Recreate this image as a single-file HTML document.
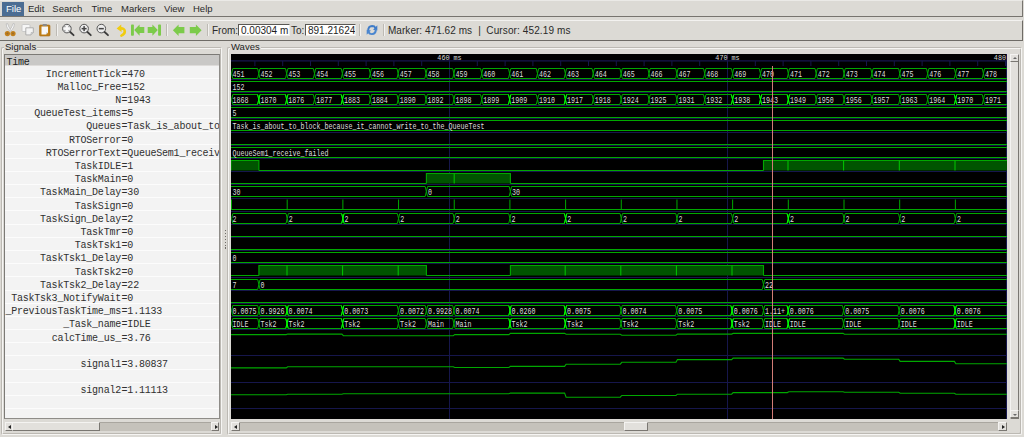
<!DOCTYPE html>
<html><head><meta charset="utf-8">
<style>
*{margin:0;padding:0;box-sizing:border-box}
html,body{width:1024px;height:437px;overflow:hidden;background:#dcdad5;font-family:"Liberation Sans",sans-serif;font-size:10px;color:#1e1e1e;position:relative}
.abs{position:absolute}
#menubar{left:0;top:0;width:1023px;height:17px;background:#dcdad5;border-bottom:1px solid #77746f;border-right:1px solid #77746f;border-top:1px solid #ebeae7}
.mi{position:absolute;top:3.2px;height:11px;line-height:11px;font-size:9.5px;color:#2a2a2a}
#filehl{left:2px;top:2px;width:22px;height:14px;background:#4b6d93}
#toolbar{left:0;top:20px;width:1023px;height:21px;background:#dcdad5;border-top:1px solid #f3f2f0;border-bottom:1px solid #6e6b66;border-right:1px solid #6e6b66}
.tsep{position:absolute;top:24px;width:2px;height:12px;border-left:1px solid #bdbab4;border-right:1px solid #f2f1ef}
.inp{position:absolute;top:24px;height:12px;background:#fff;border:1px solid #5a5854;border-right-color:#eeede9;border-bottom-color:#eeede9;font-size:10px;line-height:11px;padding-left:2px;overflow:hidden;white-space:nowrap}
.tl{position:absolute;top:24.5px;font-size:10px;line-height:11px;white-space:nowrap;color:#2a2a2a}
.frame{position:absolute;border:1px solid #bcb9b3;border-right-color:#f6f5f3;border-bottom-color:#f6f5f3;box-shadow:inset 1px 1px 0 #f6f5f3, inset -1px -1px 0 #bcb9b3;border-radius:2px}
.flabel{position:absolute;top:41px;font-size:9.5px;line-height:11px;background:#dcdad5;padding:0 1px;color:#1e1e1e}
#list{left:4px;top:54px;width:216px;height:365px;background:#f3f3f3;border:1px solid #7c7a76;border-right-color:#8e8c88;border-bottom-color:#8e8c88;overflow:hidden}
#listhdr{position:absolute;left:0;top:0;width:100%;height:11px;background:#c9c8c6;border-bottom:1px solid #dedcda}
.rl{position:absolute;left:0;width:216px;height:1px;background:#fcfcfc}
.sn,.sv{position:absolute;font-family:"Liberation Mono",monospace;font-size:10px;letter-spacing:-0.22px;line-height:12px;white-space:nowrap;color:#303030}
.sn{right:98px;text-align:right}
.sv{left:121.6px}
.hs{position:absolute;height:9px;background:#c5c2bb;border-top:1px solid #a9a69f}
.arl{position:absolute;left:2px;top:1.5px;width:0;height:0;border-top:2.5px solid transparent;border-bottom:2.5px solid transparent;border-right:3px solid #222}
.arr{position:absolute;left:3px;top:1.5px;width:0;height:0;border-top:2.5px solid transparent;border-bottom:2.5px solid transparent;border-left:3px solid #222}
.aru{position:absolute;left:1.5px;top:2px;width:0;height:0;border-left:2.5px solid transparent;border-right:2.5px solid transparent;border-bottom:2px solid #666}
.ard{position:absolute;left:1.5px;top:2.5px;width:0;height:0;border-left:2.5px solid transparent;border-right:2.5px solid transparent;border-top:2px solid #666}
.sbtn{position:absolute;background:#e2e0dc;border:1px solid #7a7772;border-left-color:#f4f3f1;border-top-color:#f4f3f1}
svg text.wt{font-family:"Liberation Mono",monospace;font-size:9px;fill:#dedede}
svg text.rt{font-family:"Liberation Mono",monospace;font-size:7.4px;fill:#d8d8d8}
</style></head><body>
<div id="menubar" class="abs"></div>
<div id="filehl" class="abs"></div>
<div class="mi" style="left:6px;color:#fff">File</div>
<div class="mi" style="left:28px">Edit</div>
<div class="mi" style="left:52.3px">Search</div>
<div class="mi" style="left:91.5px">Time</div>
<div class="mi" style="left:121px">Markers</div>
<div class="mi" style="left:164px">View</div>
<div class="mi" style="left:193px">Help</div>

<div id="toolbar" class="abs"></div>
<!-- icons -->
<svg class="abs" style="left:0;top:18px" width="212" height="22" viewBox="0 18 212 22">
 <!-- scissors -->
 <g>
  <path d="M6.2,23.8 Q5.8,26.5 9.6,31.2 L10.9,30.4 Q8.2,26.4 7.6,23.6 Z" fill="#fbfbfb" stroke="#a9a9a9" stroke-width="0.6"/>
  <path d="M14.4,23.8 Q14.8,26.5 11,31.2 L9.7,30.4 Q12.4,26.4 13,23.6 Z" fill="#fbfbfb" stroke="#a9a9a9" stroke-width="0.6"/>
  <circle cx="7.4" cy="33.6" r="2.6" fill="#c2801c"/>
  <circle cx="13.0" cy="33.6" r="2.6" fill="#c2801c"/>
  <circle cx="7.4" cy="33.6" r="1.0" fill="#9a6a2a"/>
  <circle cx="13.0" cy="33.6" r="1.0" fill="#9a6a2a"/>
 </g>
 <!-- copy -->
 <rect x="22" y="24.5" width="8" height="7" rx="1" fill="#f6f6f6" stroke="#c2c2c2" stroke-width="0.8"/>
 <path d="M25.8,27.8 L33.3,27.8 L33.3,32.6 L31,34.9 L25.8,34.9 Z" fill="#f3f3f3" stroke="#a0a0a0" stroke-width="0.8"/>
 <path d="M31,34.9 L31,32.6 L33.3,32.6" fill="#d8d8d8" stroke="#a0a0a0" stroke-width="0.5"/>
 <!-- paste -->
 <rect x="39.5" y="25" width="10.5" height="11" rx="1" fill="#c07f16" stroke="#a86a10" stroke-width="0.6"/>
 <path d="M41.5,26.6 L48,26.6 L48,32.5 L46,34.6 L41.5,34.6 Z" fill="#f8f8f8"/>
 <path d="M46,34.6 L46,32.5 L48,32.5 Z" fill="#c8c8c8"/>
 <rect x="42.5" y="24" width="4.5" height="2" rx="0.8" fill="#8a8a8a"/>
 <!-- zoom fit -->
 <g fill="none" stroke="#555" stroke-width="1">
  <circle cx="66.9" cy="28.6" r="4.3" fill="#ececec"/>
  <circle cx="84.1" cy="28.6" r="4.3" fill="#ececec"/>
  <circle cx="101.3" cy="28.6" r="4.3" fill="#ececec"/>
 </g>
 <g stroke="#3c3c3c" stroke-width="1.8" stroke-linecap="round">
  <line x1="70.2" y1="32" x2="73.6" y2="35.2"/>
  <line x1="87.4" y1="32" x2="90.8" y2="35.2"/>
  <line x1="104.6" y1="32" x2="108" y2="35.2"/>
 </g>
 <g fill="#fafafa"><rect x="64.3" y="27.8" width="5.2" height="1.6"/><rect x="66.1" y="26" width="1.6" height="5.2"/></g>
 <g fill="#444"><rect x="81.6" y="27.9" width="5" height="1.5"/><rect x="83.35" y="26.1" width="1.5" height="5"/><rect x="98.8" y="27.9" width="5" height="1.5"/></g>
 <!-- undo -->
 <path d="M116.6,28.6 L121.2,24.4 L121.6,32 Z" fill="#f0cc10"/>
 <path d="M120,28.4 Q124.8,28 124.8,31.6 Q124.8,34.2 121.4,35.6" fill="none" stroke="#f0cc10" stroke-width="2.6" stroke-linecap="round"/>
 <!-- first -->
 <rect x="131" y="24.4" width="2.9" height="11.4" rx="0.8" fill="#7ccb4a"/>
 <path d="M134.2,30.1 L139.6,24.4 L139.6,27.1 L144.3,27.1 L144.3,33 L139.6,33 L139.6,35.8 Z" fill="#7ccb4a"/>
 <!-- last -->
 <rect x="158.1" y="24.4" width="2.9" height="11.4" rx="0.8" fill="#7ccb4a"/>
 <path d="M157.8,30.1 L152.4,24.4 L152.4,27.1 L147.7,27.1 L147.7,33 L152.4,33 L152.4,35.8 Z" fill="#7ccb4a"/>
 <!-- left / right -->
 <path d="M172.9,30.2 L178.6,24.5 L178.6,27.1 L184.4,27.1 L184.4,33.2 L178.6,33.2 L178.6,36 Z" fill="#7ccb4a"/>
 <path d="M201.6,30.2 L195.9,24.5 L195.9,27.1 L189.8,27.1 L189.8,33.2 L195.9,33.2 L195.9,36 Z" fill="#7ccb4a"/>
 <!-- zoom fit marks -->
 <g fill="#9a9a9a"><circle cx="64.8" cy="26.5" r="0.8"/><circle cx="69" cy="26.5" r="0.8"/><circle cx="64.8" cy="30.7" r="0.8"/><circle cx="69" cy="30.7" r="0.8"/></g>
</svg>
<div class="tsep" style="left:56px"></div>
<div class="tsep" style="left:166px"></div>
<div class="tsep" style="left:207px"></div>
<div class="tl" style="left:212px">From:</div>
<div class="inp" style="left:238px;width:52px">0.00304 m</div>
<div class="tl" style="left:291px">To:</div>
<div class="inp" style="left:305px;width:51px">891.21624</div>
<div class="tsep" style="left:359px"></div>
<svg class="abs" style="left:364px;top:22px" width="16" height="16" viewBox="0 0 16 16">
 <g transform="translate(8,8) scale(0.86) translate(-8,-8)">
 <path d="M3.6,9.2 Q3.4,3.6 8.2,3.4 Q10.9,3.4 12,5.6" fill="none" stroke="#3f7cc8" stroke-width="2.3"/>
 <path d="M14.2,2.6 L14.2,8.6 L9.2,7.6 Z" fill="#3f7cc8"/>
 <path d="M12.4,6.8 Q12.6,12.6 7.8,12.8 Q5.1,12.8 4,10.6" fill="none" stroke="#4a86cf" stroke-width="2.3"/>
 <path d="M1.8,13.6 L1.8,7.6 L6.8,8.6 Z" fill="#4a86cf"/>
 </g>
</svg>
<div class="tsep" style="left:383px"></div>
<div class="tl" style="left:388px;letter-spacing:0.04px">Marker: 471.62 ms</div>
<div class="tl" style="left:478.3px">|</div>
<div class="tl" style="left:486.3px;letter-spacing:0.12px">Cursor: 452.19 ms</div>

<!-- Signals frame -->
<div class="frame" style="left:1px;top:47px;width:221px;height:388px"></div>
<div class="flabel" style="left:4px">Signals</div>
<div id="list" class="abs">
 <div id="listhdr"></div>
 <div style="position:absolute;left:1.5px;top:1.5px;font-family:'Liberation Mono',monospace;font-size:10px;letter-spacing:-0.22px;line-height:11px;color:#222">Time</div>
</div>
<div class="abs" style="left:5px;top:55px;width:214px;height:363px;overflow:hidden">
<div class="rl" style="top:23.49px"></div>
<div class="rl" style="top:36.68px"></div>
<div class="rl" style="top:49.87px"></div>
<div class="rl" style="top:63.06px"></div>
<div class="rl" style="top:76.25px"></div>
<div class="rl" style="top:89.44px"></div>
<div class="rl" style="top:102.63px"></div>
<div class="rl" style="top:115.82px"></div>
<div class="rl" style="top:129.01px"></div>
<div class="rl" style="top:142.20px"></div>
<div class="rl" style="top:155.39px"></div>
<div class="rl" style="top:168.58px"></div>
<div class="rl" style="top:181.77px"></div>
<div class="rl" style="top:194.96px"></div>
<div class="rl" style="top:208.15px"></div>
<div class="rl" style="top:221.34px"></div>
<div class="rl" style="top:234.53px"></div>
<div class="rl" style="top:247.72px"></div>
<div class="rl" style="top:260.91px"></div>
<div class="rl" style="top:274.10px"></div>
<div class="rl" style="top:287.29px"></div>
<div class="rl" style="top:300.48px"></div>
<div class="rl" style="top:313.67px"></div>
<div class="rl" style="top:326.86px"></div>
<div class="rl" style="top:340.05px"></div>
<div class="rl" style="top:353.24px"></div>
</div>
<div class="abs" style="left:0;top:0;width:219px;height:418px;overflow:hidden">
<div class="sn" style="top:68.70px">IncrementTick</div><div class="sv" style="top:68.70px">=470</div>
<div class="sn" style="top:81.89px">Malloc_Free</div><div class="sv" style="top:81.89px">=152</div>
<div class="sn" style="top:95.08px">N</div><div class="sv" style="top:95.08px">=1943</div>
<div class="sn" style="top:108.27px">QueueTest_items</div><div class="sv" style="top:108.27px">=5</div>
<div class="sn" style="top:121.46px">Queues</div><div class="sv" style="top:121.46px">=Task_is_about_to_block_because_it_cannot_write_to_the_QueueTest</div>
<div class="sn" style="top:134.65px">RTOSerror</div><div class="sv" style="top:134.65px">=0</div>
<div class="sn" style="top:147.84px">RTOSerrorText</div><div class="sv" style="top:147.84px">=QueueSem1_receive_failed</div>
<div class="sn" style="top:161.03px">TaskIDLE</div><div class="sv" style="top:161.03px">=1</div>
<div class="sn" style="top:174.22px">TaskMain</div><div class="sv" style="top:174.22px">=0</div>
<div class="sn" style="top:187.41px">TaskMain_Delay</div><div class="sv" style="top:187.41px">=30</div>
<div class="sn" style="top:200.60px">TaskSign</div><div class="sv" style="top:200.60px">=0</div>
<div class="sn" style="top:213.79px">TaskSign_Delay</div><div class="sv" style="top:213.79px">=2</div>
<div class="sn" style="top:226.98px">TaskTmr</div><div class="sv" style="top:226.98px">=0</div>
<div class="sn" style="top:240.17px">TaskTsk1</div><div class="sv" style="top:240.17px">=0</div>
<div class="sn" style="top:253.36px">TaskTsk1_Delay</div><div class="sv" style="top:253.36px">=0</div>
<div class="sn" style="top:266.55px">TaskTsk2</div><div class="sv" style="top:266.55px">=0</div>
<div class="sn" style="top:279.74px">TaskTsk2_Delay</div><div class="sv" style="top:279.74px">=22</div>
<div class="sn" style="top:292.93px">TaskTsk3_NotifyWait</div><div class="sv" style="top:292.93px">=0</div>
<div class="sn" style="top:306.12px">_PreviousTaskTime_ms</div><div class="sv" style="top:306.12px">=1.1133</div>
<div class="sn" style="top:319.31px">_Task_name</div><div class="sv" style="top:319.31px">=IDLE</div>
<div class="sn" style="top:332.50px">calcTime_us_</div><div class="sv" style="top:332.50px">=3.76</div>
<div class="sn" style="top:358.88px">signal1</div><div class="sv" style="top:358.88px">=3.80837</div>
<div class="sn" style="top:385.26px">signal2</div><div class="sv" style="top:385.26px">=1.11113</div>
</div>
<!-- signals hscroll -->
<div class="hs" style="left:5px;top:422px;width:214px"></div>
<div class="sbtn" style="left:5px;top:422px;width:8px;height:9px"><div class="arl"></div></div>
<div class="sbtn" style="left:12px;top:422px;width:88px;height:9px"></div>
<div class="sbtn" style="left:211px;top:422px;width:8px;height:9px"><div class="arr"></div></div>

<!-- Waves frame -->
<div class="frame" style="left:227px;top:47px;width:795px;height:388px"></div>
<div class="flabel" style="left:230px">Waves</div>
<svg class="abs" style="left:231px;top:54px;background:#000" width="776" height="365" viewBox="231 54 776 365">
<rect x="231" y="54" width="776" height="365" fill="#000"/>
<line x1="449.5" y1="54.0" x2="449.5" y2="419.0" stroke="#16164c" stroke-width="1"/>
<line x1="727.5" y1="54.0" x2="727.5" y2="419.0" stroke="#16164c" stroke-width="1"/>
<line x1="1006.5" y1="54.0" x2="1006.5" y2="419.0" stroke="#16164c" stroke-width="1"/>
<line x1="231.0" y1="60.9" x2="1007.0" y2="60.9" stroke="#16164c" stroke-width="1.2"/>
<line x1="254.90" y1="60.9" x2="254.90" y2="66" stroke="#16164c" stroke-width="1"/>
<line x1="282.70" y1="60.9" x2="282.70" y2="66" stroke="#16164c" stroke-width="1"/>
<line x1="310.50" y1="60.9" x2="310.50" y2="66" stroke="#16164c" stroke-width="1"/>
<line x1="338.30" y1="60.9" x2="338.30" y2="66" stroke="#16164c" stroke-width="1"/>
<line x1="366.10" y1="60.9" x2="366.10" y2="66" stroke="#16164c" stroke-width="1"/>
<line x1="393.90" y1="60.9" x2="393.90" y2="66" stroke="#16164c" stroke-width="1"/>
<line x1="421.70" y1="60.9" x2="421.70" y2="66" stroke="#16164c" stroke-width="1"/>
<line x1="449.50" y1="60.9" x2="449.50" y2="66" stroke="#16164c" stroke-width="1"/>
<line x1="477.30" y1="60.9" x2="477.30" y2="66" stroke="#16164c" stroke-width="1"/>
<line x1="505.10" y1="60.9" x2="505.10" y2="66" stroke="#16164c" stroke-width="1"/>
<line x1="532.90" y1="60.9" x2="532.90" y2="66" stroke="#16164c" stroke-width="1"/>
<line x1="560.70" y1="60.9" x2="560.70" y2="66" stroke="#16164c" stroke-width="1"/>
<line x1="588.50" y1="60.9" x2="588.50" y2="66" stroke="#16164c" stroke-width="1"/>
<line x1="616.30" y1="60.9" x2="616.30" y2="66" stroke="#16164c" stroke-width="1"/>
<line x1="644.10" y1="60.9" x2="644.10" y2="66" stroke="#16164c" stroke-width="1"/>
<line x1="671.90" y1="60.9" x2="671.90" y2="66" stroke="#16164c" stroke-width="1"/>
<line x1="699.70" y1="60.9" x2="699.70" y2="66" stroke="#16164c" stroke-width="1"/>
<line x1="727.50" y1="60.9" x2="727.50" y2="66" stroke="#16164c" stroke-width="1"/>
<line x1="755.30" y1="60.9" x2="755.30" y2="66" stroke="#16164c" stroke-width="1"/>
<line x1="783.10" y1="60.9" x2="783.10" y2="66" stroke="#16164c" stroke-width="1"/>
<line x1="810.90" y1="60.9" x2="810.90" y2="66" stroke="#16164c" stroke-width="1"/>
<line x1="838.70" y1="60.9" x2="838.70" y2="66" stroke="#16164c" stroke-width="1"/>
<line x1="866.50" y1="60.9" x2="866.50" y2="66" stroke="#16164c" stroke-width="1"/>
<line x1="894.30" y1="60.9" x2="894.30" y2="66" stroke="#16164c" stroke-width="1"/>
<line x1="922.10" y1="60.9" x2="922.10" y2="66" stroke="#16164c" stroke-width="1"/>
<line x1="949.90" y1="60.9" x2="949.90" y2="66" stroke="#16164c" stroke-width="1"/>
<line x1="977.70" y1="60.9" x2="977.70" y2="66" stroke="#16164c" stroke-width="1"/>
<line x1="1005.50" y1="60.9" x2="1005.50" y2="66" stroke="#16164c" stroke-width="1"/>
<text x="437.35" y="59.8" class="rt" textLength="24.30" lengthAdjust="spacingAndGlyphs">460 ms</text>
<text x="715.35" y="59.8" class="rt" textLength="24.30" lengthAdjust="spacingAndGlyphs">470 ms</text>
<text x="993.85" y="59.8" class="rt" textLength="24.30" lengthAdjust="spacingAndGlyphs">480 ms</text>
<path d="M231.60,73.5 L232.80,68.5 L257.60,68.5 L258.80,73.5 L257.60,78.5 L232.80,78.5 Z M258.80,73.5 L260.00,68.5 L285.47,68.5 L286.67,73.5 L285.47,78.5 L260.00,78.5 Z M286.67,73.5 L287.87,68.5 L313.34,68.5 L314.54,73.5 L313.34,78.5 L287.87,78.5 Z M314.54,73.5 L315.74,68.5 L341.21,68.5 L342.41,73.5 L341.21,78.5 L315.74,78.5 Z M342.41,73.5 L343.61,68.5 L369.08,68.5 L370.28,73.5 L369.08,78.5 L343.61,78.5 Z M370.28,73.5 L371.48,68.5 L396.95,68.5 L398.15,73.5 L396.95,78.5 L371.48,78.5 Z M398.15,73.5 L399.35,68.5 L424.82,68.5 L426.02,73.5 L424.82,78.5 L399.35,78.5 Z M426.02,73.5 L427.22,68.5 L452.69,68.5 L453.89,73.5 L452.69,78.5 L427.22,78.5 Z M453.89,73.5 L455.09,68.5 L480.56,68.5 L481.76,73.5 L480.56,78.5 L455.09,78.5 Z M481.76,73.5 L482.96,68.5 L508.43,68.5 L509.63,73.5 L508.43,78.5 L482.96,78.5 Z M509.63,73.5 L510.83,68.5 L536.30,68.5 L537.50,73.5 L536.30,78.5 L510.83,78.5 Z M537.50,73.5 L538.70,68.5 L564.17,68.5 L565.37,73.5 L564.17,78.5 L538.70,78.5 Z M565.37,73.5 L566.57,68.5 L592.04,68.5 L593.24,73.5 L592.04,78.5 L566.57,78.5 Z M593.24,73.5 L594.44,68.5 L619.91,68.5 L621.11,73.5 L619.91,78.5 L594.44,78.5 Z M621.11,73.5 L622.31,68.5 L647.78,68.5 L648.98,73.5 L647.78,78.5 L622.31,78.5 Z M648.98,73.5 L650.18,68.5 L675.65,68.5 L676.85,73.5 L675.65,78.5 L650.18,78.5 Z M676.85,73.5 L678.05,68.5 L703.52,68.5 L704.72,73.5 L703.52,78.5 L678.05,78.5 Z M704.72,73.5 L705.92,68.5 L731.39,68.5 L732.59,73.5 L731.39,78.5 L705.92,78.5 Z M732.59,73.5 L733.79,68.5 L759.26,68.5 L760.46,73.5 L759.26,78.5 L733.79,78.5 Z M760.46,73.5 L761.66,68.5 L787.13,68.5 L788.33,73.5 L787.13,78.5 L761.66,78.5 Z M788.33,73.5 L789.53,68.5 L815.00,68.5 L816.20,73.5 L815.00,78.5 L789.53,78.5 Z M816.20,73.5 L817.40,68.5 L842.87,68.5 L844.07,73.5 L842.87,78.5 L817.40,78.5 Z M844.07,73.5 L845.27,68.5 L870.74,68.5 L871.94,73.5 L870.74,78.5 L845.27,78.5 Z M871.94,73.5 L873.14,68.5 L898.61,68.5 L899.81,73.5 L898.61,78.5 L873.14,78.5 Z M899.81,73.5 L901.01,68.5 L926.48,68.5 L927.68,73.5 L926.48,78.5 L901.01,78.5 Z M927.68,73.5 L928.88,68.5 L954.35,68.5 L955.55,73.5 L954.35,78.5 L928.88,78.5 Z M955.55,73.5 L956.75,68.5 L982.22,68.5 L983.42,73.5 L982.22,78.5 L956.75,78.5 Z M983.42,73.5 L984.62,68.5 L1010.80,68.5 L1012.00,73.5 L1010.80,78.5 L984.62,78.5 Z" fill="none" stroke="#00a800" stroke-width="1"/>
<text x="232.60" y="76.50" class="wt" textLength="12.00" lengthAdjust="spacingAndGlyphs">451</text>
<text x="260.40" y="76.50" class="wt" textLength="12.00" lengthAdjust="spacingAndGlyphs">452</text>
<text x="288.27" y="76.50" class="wt" textLength="12.00" lengthAdjust="spacingAndGlyphs">453</text>
<text x="316.14" y="76.50" class="wt" textLength="12.00" lengthAdjust="spacingAndGlyphs">454</text>
<text x="344.01" y="76.50" class="wt" textLength="12.00" lengthAdjust="spacingAndGlyphs">455</text>
<text x="371.88" y="76.50" class="wt" textLength="12.00" lengthAdjust="spacingAndGlyphs">456</text>
<text x="399.75" y="76.50" class="wt" textLength="12.00" lengthAdjust="spacingAndGlyphs">457</text>
<text x="427.62" y="76.50" class="wt" textLength="12.00" lengthAdjust="spacingAndGlyphs">458</text>
<text x="455.49" y="76.50" class="wt" textLength="12.00" lengthAdjust="spacingAndGlyphs">459</text>
<text x="483.36" y="76.50" class="wt" textLength="12.00" lengthAdjust="spacingAndGlyphs">460</text>
<text x="511.23" y="76.50" class="wt" textLength="12.00" lengthAdjust="spacingAndGlyphs">461</text>
<text x="539.10" y="76.50" class="wt" textLength="12.00" lengthAdjust="spacingAndGlyphs">462</text>
<text x="566.97" y="76.50" class="wt" textLength="12.00" lengthAdjust="spacingAndGlyphs">463</text>
<text x="594.84" y="76.50" class="wt" textLength="12.00" lengthAdjust="spacingAndGlyphs">464</text>
<text x="622.71" y="76.50" class="wt" textLength="12.00" lengthAdjust="spacingAndGlyphs">465</text>
<text x="650.58" y="76.50" class="wt" textLength="12.00" lengthAdjust="spacingAndGlyphs">466</text>
<text x="678.45" y="76.50" class="wt" textLength="12.00" lengthAdjust="spacingAndGlyphs">467</text>
<text x="706.32" y="76.50" class="wt" textLength="12.00" lengthAdjust="spacingAndGlyphs">468</text>
<text x="734.19" y="76.50" class="wt" textLength="12.00" lengthAdjust="spacingAndGlyphs">469</text>
<text x="762.06" y="76.50" class="wt" textLength="12.00" lengthAdjust="spacingAndGlyphs">470</text>
<text x="789.93" y="76.50" class="wt" textLength="12.00" lengthAdjust="spacingAndGlyphs">471</text>
<text x="817.80" y="76.50" class="wt" textLength="12.00" lengthAdjust="spacingAndGlyphs">472</text>
<text x="845.67" y="76.50" class="wt" textLength="12.00" lengthAdjust="spacingAndGlyphs">473</text>
<text x="873.54" y="76.50" class="wt" textLength="12.00" lengthAdjust="spacingAndGlyphs">474</text>
<text x="901.41" y="76.50" class="wt" textLength="12.00" lengthAdjust="spacingAndGlyphs">475</text>
<text x="929.28" y="76.50" class="wt" textLength="12.00" lengthAdjust="spacingAndGlyphs">476</text>
<text x="957.15" y="76.50" class="wt" textLength="12.00" lengthAdjust="spacingAndGlyphs">477</text>
<text x="985.02" y="76.50" class="wt" textLength="12.00" lengthAdjust="spacingAndGlyphs">478</text>
<line x1="231.0" y1="79.50" x2="1007.0" y2="79.50" stroke="#16164c" stroke-width="1"/>
<path d="M228.0,81.5 L1010.80,81.5 L1012.00,86.5 L1010.80,91.5 L228.0,91.5" fill="none" stroke="#00a800" stroke-width="1"/>
<text x="232.60" y="89.69" class="wt" textLength="12.00" lengthAdjust="spacingAndGlyphs">152</text>
<line x1="231.0" y1="92.50" x2="1007.0" y2="92.50" stroke="#16164c" stroke-width="1"/>
<path d="M231.60,99.5 L232.80,94.5 L257.60,94.5 L258.80,99.5 L257.60,104.5 L232.80,104.5 Z M258.80,99.5 L260.00,94.5 L285.47,94.5 L286.67,99.5 L285.47,104.5 L260.00,104.5 Z M286.67,99.5 L287.87,94.5 L313.34,94.5 L314.54,99.5 L313.34,104.5 L287.87,104.5 Z M314.54,99.5 L315.74,94.5 L341.21,94.5 L342.41,99.5 L341.21,104.5 L315.74,104.5 Z M342.41,99.5 L343.61,94.5 L369.08,94.5 L370.28,99.5 L369.08,104.5 L343.61,104.5 Z M370.28,99.5 L371.48,94.5 L396.95,94.5 L398.15,99.5 L396.95,104.5 L371.48,104.5 Z M398.15,99.5 L399.35,94.5 L424.82,94.5 L426.02,99.5 L424.82,104.5 L399.35,104.5 Z M426.02,99.5 L427.22,94.5 L452.69,94.5 L453.89,99.5 L452.69,104.5 L427.22,104.5 Z M453.89,99.5 L455.09,94.5 L480.56,94.5 L481.76,99.5 L480.56,104.5 L455.09,104.5 Z M481.76,99.5 L482.96,94.5 L508.43,94.5 L509.63,99.5 L508.43,104.5 L482.96,104.5 Z M509.63,99.5 L510.83,94.5 L536.30,94.5 L537.50,99.5 L536.30,104.5 L510.83,104.5 Z M537.50,99.5 L538.70,94.5 L564.17,94.5 L565.37,99.5 L564.17,104.5 L538.70,104.5 Z M565.37,99.5 L566.57,94.5 L592.04,94.5 L593.24,99.5 L592.04,104.5 L566.57,104.5 Z M593.24,99.5 L594.44,94.5 L619.91,94.5 L621.11,99.5 L619.91,104.5 L594.44,104.5 Z M621.11,99.5 L622.31,94.5 L647.78,94.5 L648.98,99.5 L647.78,104.5 L622.31,104.5 Z M648.98,99.5 L650.18,94.5 L675.65,94.5 L676.85,99.5 L675.65,104.5 L650.18,104.5 Z M676.85,99.5 L678.05,94.5 L703.52,94.5 L704.72,99.5 L703.52,104.5 L678.05,104.5 Z M704.72,99.5 L705.92,94.5 L731.39,94.5 L732.59,99.5 L731.39,104.5 L705.92,104.5 Z M732.59,99.5 L733.79,94.5 L759.26,94.5 L760.46,99.5 L759.26,104.5 L733.79,104.5 Z M760.46,99.5 L761.66,94.5 L787.13,94.5 L788.33,99.5 L787.13,104.5 L761.66,104.5 Z M788.33,99.5 L789.53,94.5 L815.00,94.5 L816.20,99.5 L815.00,104.5 L789.53,104.5 Z M816.20,99.5 L817.40,94.5 L842.87,94.5 L844.07,99.5 L842.87,104.5 L817.40,104.5 Z M844.07,99.5 L845.27,94.5 L870.74,94.5 L871.94,99.5 L870.74,104.5 L845.27,104.5 Z M871.94,99.5 L873.14,94.5 L898.61,94.5 L899.81,99.5 L898.61,104.5 L873.14,104.5 Z M899.81,99.5 L901.01,94.5 L926.48,94.5 L927.68,99.5 L926.48,104.5 L901.01,104.5 Z M927.68,99.5 L928.88,94.5 L954.35,94.5 L955.55,99.5 L954.35,104.5 L928.88,104.5 Z M955.55,99.5 L956.75,94.5 L982.22,94.5 L983.42,99.5 L982.22,104.5 L956.75,104.5 Z M983.42,99.5 L984.62,94.5 L1010.80,94.5 L1012.00,99.5 L1010.80,104.5 L984.62,104.5 Z" fill="none" stroke="#00a800" stroke-width="1"/>
<path d="M257.60,94.5 L260.00,104.5 M260.00,94.5 L257.60,104.5" stroke="#00ff00" stroke-width="1" fill="none"/>
<path d="M285.47,94.5 L287.87,104.5 M287.87,94.5 L285.47,104.5" stroke="#00ff00" stroke-width="1" fill="none"/>
<path d="M341.21,94.5 L343.61,104.5 M343.61,94.5 L341.21,104.5" stroke="#00ff00" stroke-width="1" fill="none"/>
<path d="M508.43,94.5 L510.83,104.5 M510.83,94.5 L508.43,104.5" stroke="#00ff00" stroke-width="1" fill="none"/>
<path d="M564.17,94.5 L566.57,104.5 M566.57,94.5 L564.17,104.5" stroke="#00ff00" stroke-width="1" fill="none"/>
<path d="M731.39,94.5 L733.79,104.5 M733.79,94.5 L731.39,104.5" stroke="#00ff00" stroke-width="1" fill="none"/>
<path d="M759.26,94.5 L761.66,104.5 M761.66,94.5 L759.26,104.5" stroke="#00ff00" stroke-width="1" fill="none"/>
<path d="M787.13,94.5 L789.53,104.5 M789.53,94.5 L787.13,104.5" stroke="#00ff00" stroke-width="1" fill="none"/>
<path d="M954.35,94.5 L956.75,104.5 M956.75,94.5 L954.35,104.5" stroke="#00ff00" stroke-width="1" fill="none"/>
<text x="232.60" y="102.88" class="wt" textLength="16.00" lengthAdjust="spacingAndGlyphs">1868</text>
<text x="260.40" y="102.88" class="wt" textLength="16.00" lengthAdjust="spacingAndGlyphs">1870</text>
<text x="288.27" y="102.88" class="wt" textLength="16.00" lengthAdjust="spacingAndGlyphs">1876</text>
<text x="316.14" y="102.88" class="wt" textLength="16.00" lengthAdjust="spacingAndGlyphs">1877</text>
<text x="344.01" y="102.88" class="wt" textLength="16.00" lengthAdjust="spacingAndGlyphs">1883</text>
<text x="371.88" y="102.88" class="wt" textLength="16.00" lengthAdjust="spacingAndGlyphs">1884</text>
<text x="399.75" y="102.88" class="wt" textLength="16.00" lengthAdjust="spacingAndGlyphs">1890</text>
<text x="427.62" y="102.88" class="wt" textLength="16.00" lengthAdjust="spacingAndGlyphs">1892</text>
<text x="455.49" y="102.88" class="wt" textLength="16.00" lengthAdjust="spacingAndGlyphs">1898</text>
<text x="483.36" y="102.88" class="wt" textLength="16.00" lengthAdjust="spacingAndGlyphs">1899</text>
<text x="511.23" y="102.88" class="wt" textLength="16.00" lengthAdjust="spacingAndGlyphs">1909</text>
<text x="539.10" y="102.88" class="wt" textLength="16.00" lengthAdjust="spacingAndGlyphs">1910</text>
<text x="566.97" y="102.88" class="wt" textLength="16.00" lengthAdjust="spacingAndGlyphs">1917</text>
<text x="594.84" y="102.88" class="wt" textLength="16.00" lengthAdjust="spacingAndGlyphs">1918</text>
<text x="622.71" y="102.88" class="wt" textLength="16.00" lengthAdjust="spacingAndGlyphs">1924</text>
<text x="650.58" y="102.88" class="wt" textLength="16.00" lengthAdjust="spacingAndGlyphs">1925</text>
<text x="678.45" y="102.88" class="wt" textLength="16.00" lengthAdjust="spacingAndGlyphs">1931</text>
<text x="706.32" y="102.88" class="wt" textLength="16.00" lengthAdjust="spacingAndGlyphs">1932</text>
<text x="734.19" y="102.88" class="wt" textLength="16.00" lengthAdjust="spacingAndGlyphs">1938</text>
<text x="762.06" y="102.88" class="wt" textLength="16.00" lengthAdjust="spacingAndGlyphs">1943</text>
<text x="789.93" y="102.88" class="wt" textLength="16.00" lengthAdjust="spacingAndGlyphs">1949</text>
<text x="817.80" y="102.88" class="wt" textLength="16.00" lengthAdjust="spacingAndGlyphs">1950</text>
<text x="845.67" y="102.88" class="wt" textLength="16.00" lengthAdjust="spacingAndGlyphs">1956</text>
<text x="873.54" y="102.88" class="wt" textLength="16.00" lengthAdjust="spacingAndGlyphs">1957</text>
<text x="901.41" y="102.88" class="wt" textLength="16.00" lengthAdjust="spacingAndGlyphs">1963</text>
<text x="929.28" y="102.88" class="wt" textLength="16.00" lengthAdjust="spacingAndGlyphs">1964</text>
<text x="957.15" y="102.88" class="wt" textLength="16.00" lengthAdjust="spacingAndGlyphs">1970</text>
<text x="985.02" y="102.88" class="wt" textLength="16.00" lengthAdjust="spacingAndGlyphs">1971</text>
<line x1="231.0" y1="105.50" x2="1007.0" y2="105.50" stroke="#16164c" stroke-width="1"/>
<path d="M228.0,107.5 L1010.80,107.5 L1012.00,112.5 L1010.80,117.5 L228.0,117.5" fill="none" stroke="#00a800" stroke-width="1"/>
<text x="232.60" y="116.07" class="wt" textLength="4.00" lengthAdjust="spacingAndGlyphs">5</text>
<line x1="231.0" y1="118.50" x2="1007.0" y2="118.50" stroke="#16164c" stroke-width="1"/>
<path d="M228.0,120.5 L1010.80,120.5 L1012.00,125.5 L1010.80,130.5 L228.0,130.5" fill="none" stroke="#00a800" stroke-width="1"/>
<text x="232.60" y="129.26" class="wt" textLength="252.00" lengthAdjust="spacingAndGlyphs">Task_is_about_to_block_because_it_cannot_write_to_the_QueueTest</text>
<line x1="231.0" y1="132.50" x2="1007.0" y2="132.50" stroke="#16164c" stroke-width="1"/>
<path d="M228.00,144.5 L1010.0,144.5" fill="none" stroke="#00a800" stroke-width="1.1"/>
<line x1="231.0" y1="145.50" x2="1007.0" y2="145.50" stroke="#16164c" stroke-width="1"/>
<path d="M228.0,147.5 L1010.80,147.5 L1012.00,152.5 L1010.80,157.5 L228.0,157.5" fill="none" stroke="#00a800" stroke-width="1"/>
<text x="232.60" y="155.64" class="wt" textLength="96.00" lengthAdjust="spacingAndGlyphs">QueueSem1_receive_failed</text>
<line x1="231.0" y1="158.50" x2="1007.0" y2="158.50" stroke="#16164c" stroke-width="1"/>
<rect x="231.00" y="160.50" width="27.90" height="10.00" fill="#005400"/>
<rect x="763.50" y="160.50" width="246.50" height="10.00" fill="#005400"/>
<path d="M228.00,170.5 L231.00,170.5 M258.90,170.5 L763.50,170.5 M231.00,170.5 L231.00,160.5 L258.90,160.5 L258.90,170.5 M763.50,170.5 L763.50,160.5 L1010.00,160.5 L1010.00,170.5" fill="none" stroke="#00a800" stroke-width="1.1"/>
<line x1="788.00" y1="160.5" x2="788.00" y2="170.5" stroke="#00c800" stroke-width="1"/>
<line x1="843.60" y1="160.5" x2="843.60" y2="170.5" stroke="#00c800" stroke-width="1"/>
<line x1="899.30" y1="160.5" x2="899.30" y2="170.5" stroke="#00c800" stroke-width="1"/>
<line x1="955.00" y1="160.5" x2="955.00" y2="170.5" stroke="#00c800" stroke-width="1"/>
<line x1="231.0" y1="171.50" x2="1007.0" y2="171.50" stroke="#16164c" stroke-width="1"/>
<rect x="426.40" y="173.50" width="84.00" height="10.00" fill="#005400"/>
<path d="M228.00,183.5 L426.40,183.5 M510.40,183.5 L1010.0,183.5 M426.40,183.5 L426.40,173.5 L510.40,173.5 L510.40,183.5" fill="none" stroke="#00a800" stroke-width="1.1"/>
<line x1="454.20" y1="173.5" x2="454.20" y2="183.5" stroke="#00c800" stroke-width="1"/>
<line x1="231.0" y1="184.50" x2="1007.0" y2="184.50" stroke="#16164c" stroke-width="1"/>
<path d="M228.0,186.5 L425.20,186.5 L426.40,191.5 L425.20,196.5 L228.0,196.5 M426.40,191.5 L427.60,186.5 L509.20,186.5 L510.40,191.5 L509.20,196.5 L427.60,196.5 Z M510.40,191.5 L511.60,186.5 L1010.80,186.5 L1012.00,191.5 L1010.80,196.5 L511.60,196.5 Z" fill="none" stroke="#00a800" stroke-width="1"/>
<text x="232.60" y="195.21" class="wt" textLength="8.00" lengthAdjust="spacingAndGlyphs">30</text>
<text x="428.00" y="195.21" class="wt" textLength="4.00" lengthAdjust="spacingAndGlyphs">0</text>
<text x="512.00" y="195.21" class="wt" textLength="8.00" lengthAdjust="spacingAndGlyphs">30</text>
<line x1="231.0" y1="198.50" x2="1007.0" y2="198.50" stroke="#16164c" stroke-width="1"/>
<path d="M228.00,209.5 L1010.0,209.5" fill="none" stroke="#00a800" stroke-width="1.1"/>
<line x1="231.50" y1="199.5" x2="231.50" y2="209.5" stroke="#00a800" stroke-width="1"/>
<line x1="287.20" y1="199.5" x2="287.20" y2="209.5" stroke="#00a800" stroke-width="1"/>
<line x1="342.88" y1="199.5" x2="342.88" y2="209.5" stroke="#00a800" stroke-width="1"/>
<line x1="398.56" y1="199.5" x2="398.56" y2="209.5" stroke="#00a800" stroke-width="1"/>
<line x1="454.24" y1="199.5" x2="454.24" y2="209.5" stroke="#00a800" stroke-width="1"/>
<line x1="509.92" y1="199.5" x2="509.92" y2="209.5" stroke="#00a800" stroke-width="1"/>
<line x1="565.60" y1="199.5" x2="565.60" y2="209.5" stroke="#00a800" stroke-width="1"/>
<line x1="621.28" y1="199.5" x2="621.28" y2="209.5" stroke="#00a800" stroke-width="1"/>
<line x1="676.96" y1="199.5" x2="676.96" y2="209.5" stroke="#00a800" stroke-width="1"/>
<line x1="732.64" y1="199.5" x2="732.64" y2="209.5" stroke="#00a800" stroke-width="1"/>
<line x1="788.32" y1="199.5" x2="788.32" y2="209.5" stroke="#00a800" stroke-width="1"/>
<line x1="844.00" y1="199.5" x2="844.00" y2="209.5" stroke="#00a800" stroke-width="1"/>
<line x1="899.68" y1="199.5" x2="899.68" y2="209.5" stroke="#00a800" stroke-width="1"/>
<line x1="955.36" y1="199.5" x2="955.36" y2="209.5" stroke="#00a800" stroke-width="1"/>
<line x1="231.0" y1="211.50" x2="1007.0" y2="211.50" stroke="#16164c" stroke-width="1"/>
<path d="M231.60,218.5 L232.80,213.5 L286.00,213.5 L287.20,218.5 L286.00,223.5 L232.80,223.5 Z M287.20,218.5 L288.40,213.5 L341.68,213.5 L342.88,218.5 L341.68,223.5 L288.40,223.5 Z M342.88,218.5 L344.08,213.5 L397.36,213.5 L398.56,218.5 L397.36,223.5 L344.08,223.5 Z M398.56,218.5 L399.76,213.5 L453.04,213.5 L454.24,218.5 L453.04,223.5 L399.76,223.5 Z M454.24,218.5 L455.44,213.5 L508.72,213.5 L509.92,218.5 L508.72,223.5 L455.44,223.5 Z M509.92,218.5 L511.12,213.5 L564.40,213.5 L565.60,218.5 L564.40,223.5 L511.12,223.5 Z M565.60,218.5 L566.80,213.5 L620.08,213.5 L621.28,218.5 L620.08,223.5 L566.80,223.5 Z M621.28,218.5 L622.48,213.5 L675.76,213.5 L676.96,218.5 L675.76,223.5 L622.48,223.5 Z M676.96,218.5 L678.16,213.5 L731.44,213.5 L732.64,218.5 L731.44,223.5 L678.16,223.5 Z M732.64,218.5 L733.84,213.5 L787.12,213.5 L788.32,218.5 L787.12,223.5 L733.84,223.5 Z M788.32,218.5 L789.52,213.5 L842.80,213.5 L844.00,218.5 L842.80,223.5 L789.52,223.5 Z M844.00,218.5 L845.20,213.5 L898.48,213.5 L899.68,218.5 L898.48,223.5 L845.20,223.5 Z M899.68,218.5 L900.88,213.5 L954.16,213.5 L955.36,218.5 L954.16,223.5 L900.88,223.5 Z M955.36,218.5 L956.56,213.5 L1010.80,213.5 L1012.00,218.5 L1010.80,223.5 L956.56,223.5 Z" fill="none" stroke="#00a800" stroke-width="1"/>
<path d="M341.68,213.5 L344.08,223.5 M344.08,213.5 L341.68,223.5" stroke="#00ff00" stroke-width="1" fill="none"/>
<path d="M564.40,213.5 L566.80,223.5 M566.80,213.5 L564.40,223.5" stroke="#00ff00" stroke-width="1" fill="none"/>
<path d="M787.12,213.5 L789.52,223.5 M789.52,213.5 L787.12,223.5" stroke="#00ff00" stroke-width="1" fill="none"/>
<text x="232.60" y="221.59" class="wt" textLength="4.00" lengthAdjust="spacingAndGlyphs">2</text>
<text x="288.80" y="221.59" class="wt" textLength="4.00" lengthAdjust="spacingAndGlyphs">2</text>
<text x="344.48" y="221.59" class="wt" textLength="4.00" lengthAdjust="spacingAndGlyphs">2</text>
<text x="400.16" y="221.59" class="wt" textLength="4.00" lengthAdjust="spacingAndGlyphs">2</text>
<text x="455.84" y="221.59" class="wt" textLength="4.00" lengthAdjust="spacingAndGlyphs">2</text>
<text x="511.52" y="221.59" class="wt" textLength="4.00" lengthAdjust="spacingAndGlyphs">2</text>
<text x="567.20" y="221.59" class="wt" textLength="4.00" lengthAdjust="spacingAndGlyphs">2</text>
<text x="622.88" y="221.59" class="wt" textLength="4.00" lengthAdjust="spacingAndGlyphs">2</text>
<text x="678.56" y="221.59" class="wt" textLength="4.00" lengthAdjust="spacingAndGlyphs">2</text>
<text x="734.24" y="221.59" class="wt" textLength="4.00" lengthAdjust="spacingAndGlyphs">2</text>
<text x="789.92" y="221.59" class="wt" textLength="4.00" lengthAdjust="spacingAndGlyphs">2</text>
<text x="845.60" y="221.59" class="wt" textLength="4.00" lengthAdjust="spacingAndGlyphs">2</text>
<text x="901.28" y="221.59" class="wt" textLength="4.00" lengthAdjust="spacingAndGlyphs">2</text>
<text x="956.96" y="221.59" class="wt" textLength="4.00" lengthAdjust="spacingAndGlyphs">2</text>
<line x1="231.0" y1="224.50" x2="1007.0" y2="224.50" stroke="#16164c" stroke-width="1"/>
<path d="M228.00,236.5 L1010.0,236.5" fill="none" stroke="#00a800" stroke-width="1.1"/>
<line x1="231.0" y1="237.50" x2="1007.0" y2="237.50" stroke="#16164c" stroke-width="1"/>
<path d="M228.00,249.5 L1010.0,249.5" fill="none" stroke="#00a800" stroke-width="1.1"/>
<line x1="231.0" y1="250.50" x2="1007.0" y2="250.50" stroke="#16164c" stroke-width="1"/>
<path d="M228.0,252.5 L1010.80,252.5 L1012.00,257.5 L1010.80,262.5 L228.0,262.5" fill="none" stroke="#00a800" stroke-width="1"/>
<text x="232.60" y="261.16" class="wt" textLength="4.00" lengthAdjust="spacingAndGlyphs">0</text>
<line x1="231.0" y1="263.50" x2="1007.0" y2="263.50" stroke="#16164c" stroke-width="1"/>
<rect x="258.90" y="265.50" width="167.50" height="10.00" fill="#005400"/>
<rect x="510.40" y="265.50" width="253.10" height="10.00" fill="#005400"/>
<path d="M228.00,275.5 L258.90,275.5 M426.40,275.5 L510.40,275.5 M763.50,275.5 L1010.0,275.5 M258.90,275.5 L258.90,265.5 L426.40,265.5 L426.40,275.5 M510.40,275.5 L510.40,265.5 L763.50,265.5 L763.50,275.5" fill="none" stroke="#00a800" stroke-width="1.1"/>
<line x1="287.00" y1="265.5" x2="287.00" y2="275.5" stroke="#00c800" stroke-width="1"/>
<line x1="342.60" y1="265.5" x2="342.60" y2="275.5" stroke="#00c800" stroke-width="1"/>
<line x1="398.20" y1="265.5" x2="398.20" y2="275.5" stroke="#00c800" stroke-width="1"/>
<line x1="565.20" y1="265.5" x2="565.20" y2="275.5" stroke="#00c800" stroke-width="1"/>
<line x1="620.80" y1="265.5" x2="620.80" y2="275.5" stroke="#00c800" stroke-width="1"/>
<line x1="676.40" y1="265.5" x2="676.40" y2="275.5" stroke="#00c800" stroke-width="1"/>
<line x1="732.00" y1="265.5" x2="732.00" y2="275.5" stroke="#00c800" stroke-width="1"/>
<line x1="231.0" y1="277.50" x2="1007.0" y2="277.50" stroke="#16164c" stroke-width="1"/>
<path d="M228.0,279.5 L257.70,279.5 L258.90,284.5 L257.70,289.5 L228.0,289.5 M258.90,284.5 L260.10,279.5 L762.30,279.5 L763.50,284.5 L762.30,289.5 L260.10,289.5 Z M763.50,284.5 L764.70,279.5 L1010.80,279.5 L1012.00,284.5 L1010.80,289.5 L764.70,289.5 Z" fill="none" stroke="#00a800" stroke-width="1"/>
<text x="232.60" y="287.54" class="wt" textLength="4.00" lengthAdjust="spacingAndGlyphs">7</text>
<text x="260.50" y="287.54" class="wt" textLength="4.00" lengthAdjust="spacingAndGlyphs">0</text>
<text x="765.10" y="287.54" class="wt" textLength="8.00" lengthAdjust="spacingAndGlyphs">22</text>
<line x1="231.0" y1="290.50" x2="1007.0" y2="290.50" stroke="#16164c" stroke-width="1"/>
<path d="M228.00,302.5 L1010.0,302.5" fill="none" stroke="#00a800" stroke-width="1.1"/>
<line x1="231.0" y1="303.50" x2="1007.0" y2="303.50" stroke="#16164c" stroke-width="1"/>
<path d="M231.60,310.5 L232.80,305.5 L257.70,305.5 L258.90,310.5 L257.70,315.5 L232.80,315.5 Z M258.90,310.5 L260.10,305.5 L285.80,305.5 L287.00,310.5 L285.80,315.5 L260.10,315.5 Z M287.00,310.5 L288.20,305.5 L341.40,305.5 L342.60,310.5 L341.40,315.5 L288.20,315.5 Z M342.60,310.5 L343.80,305.5 L397.20,305.5 L398.40,310.5 L397.20,315.5 L343.80,315.5 Z M398.40,310.5 L399.60,305.5 L425.20,305.5 L426.40,310.5 L425.20,315.5 L399.60,315.5 Z M426.40,310.5 L427.60,305.5 L452.70,305.5 L453.90,310.5 L452.70,315.5 L427.60,315.5 Z M453.90,310.5 L455.10,305.5 L508.80,305.5 L510.00,310.5 L508.80,315.5 L455.10,315.5 Z M510.00,310.5 L511.20,305.5 L564.10,305.5 L565.30,310.5 L564.10,315.5 L511.20,315.5 Z M565.30,310.5 L566.50,305.5 L619.80,305.5 L621.00,310.5 L619.80,315.5 L566.50,315.5 Z M621.00,310.5 L622.20,305.5 L675.50,305.5 L676.70,310.5 L675.50,315.5 L622.20,315.5 Z M676.70,310.5 L677.90,305.5 L730.90,305.5 L732.10,310.5 L730.90,315.5 L677.90,315.5 Z M732.10,310.5 L733.30,305.5 L762.30,305.5 L763.50,310.5 L762.30,315.5 L733.30,315.5 Z M763.50,310.5 L764.70,305.5 L787.00,305.5 L788.20,310.5 L787.00,315.5 L764.70,315.5 Z M788.20,310.5 L789.40,305.5 L842.40,305.5 L843.60,310.5 L842.40,315.5 L789.40,315.5 Z M843.60,310.5 L844.80,305.5 L897.90,305.5 L899.10,310.5 L897.90,315.5 L844.80,315.5 Z M899.10,310.5 L900.30,305.5 L953.90,305.5 L955.10,310.5 L953.90,315.5 L900.30,315.5 Z M955.10,310.5 L956.30,305.5 L1010.80,305.5 L1012.00,310.5 L1010.80,315.5 L956.30,315.5 Z" fill="none" stroke="#00a800" stroke-width="1"/>
<path d="M285.80,305.5 L288.20,315.5 M288.20,305.5 L285.80,315.5" stroke="#00ff00" stroke-width="1" fill="none"/>
<path d="M341.40,305.5 L343.80,315.5 M343.80,305.5 L341.40,315.5" stroke="#00ff00" stroke-width="1" fill="none"/>
<path d="M508.80,305.5 L511.20,315.5 M511.20,305.5 L508.80,315.5" stroke="#00ff00" stroke-width="1" fill="none"/>
<path d="M564.10,305.5 L566.50,315.5 M566.50,305.5 L564.10,315.5" stroke="#00ff00" stroke-width="1" fill="none"/>
<path d="M730.90,305.5 L733.30,315.5 M733.30,305.5 L730.90,315.5" stroke="#00ff00" stroke-width="1" fill="none"/>
<path d="M787.00,305.5 L789.40,315.5 M789.40,305.5 L787.00,315.5" stroke="#00ff00" stroke-width="1" fill="none"/>
<path d="M953.90,305.5 L956.30,315.5 M956.30,305.5 L953.90,315.5" stroke="#00ff00" stroke-width="1" fill="none"/>
<text x="232.60" y="313.92" class="wt" textLength="24.00" lengthAdjust="spacingAndGlyphs">0.0075</text>
<text x="260.50" y="313.92" class="wt" textLength="24.00" lengthAdjust="spacingAndGlyphs">0.9926</text>
<text x="288.60" y="313.92" class="wt" textLength="24.00" lengthAdjust="spacingAndGlyphs">0.0074</text>
<text x="344.20" y="313.92" class="wt" textLength="24.00" lengthAdjust="spacingAndGlyphs">0.0073</text>
<text x="400.00" y="313.92" class="wt" textLength="24.00" lengthAdjust="spacingAndGlyphs">0.0072</text>
<text x="428.00" y="313.92" class="wt" textLength="24.00" lengthAdjust="spacingAndGlyphs">0.9928</text>
<text x="455.50" y="313.92" class="wt" textLength="24.00" lengthAdjust="spacingAndGlyphs">0.0074</text>
<text x="511.60" y="313.92" class="wt" textLength="24.00" lengthAdjust="spacingAndGlyphs">0.0260</text>
<text x="566.90" y="313.92" class="wt" textLength="24.00" lengthAdjust="spacingAndGlyphs">0.0075</text>
<text x="622.60" y="313.92" class="wt" textLength="24.00" lengthAdjust="spacingAndGlyphs">0.0074</text>
<text x="678.30" y="313.92" class="wt" textLength="24.00" lengthAdjust="spacingAndGlyphs">0.0075</text>
<text x="733.70" y="313.92" class="wt" textLength="24.00" lengthAdjust="spacingAndGlyphs">0.0076</text>
<text x="765.10" y="313.92" class="wt" textLength="20.00" lengthAdjust="spacingAndGlyphs">1.11+</text>
<text x="789.80" y="313.92" class="wt" textLength="24.00" lengthAdjust="spacingAndGlyphs">0.0076</text>
<text x="845.20" y="313.92" class="wt" textLength="24.00" lengthAdjust="spacingAndGlyphs">0.0075</text>
<text x="900.70" y="313.92" class="wt" textLength="24.00" lengthAdjust="spacingAndGlyphs">0.0076</text>
<text x="956.70" y="313.92" class="wt" textLength="24.00" lengthAdjust="spacingAndGlyphs">0.0076</text>
<line x1="231.0" y1="316.50" x2="1007.0" y2="316.50" stroke="#16164c" stroke-width="1"/>
<path d="M231.60,323.5 L232.80,318.5 L257.70,318.5 L258.90,323.5 L257.70,328.5 L232.80,328.5 Z M258.90,323.5 L260.10,318.5 L285.80,318.5 L287.00,323.5 L285.80,328.5 L260.10,328.5 Z M287.00,323.5 L288.20,318.5 L341.40,318.5 L342.60,323.5 L341.40,328.5 L288.20,328.5 Z M342.60,323.5 L343.80,318.5 L397.20,318.5 L398.40,323.5 L397.20,328.5 L343.80,328.5 Z M398.40,323.5 L399.60,318.5 L425.20,318.5 L426.40,323.5 L425.20,328.5 L399.60,328.5 Z M426.40,323.5 L427.60,318.5 L452.70,318.5 L453.90,323.5 L452.70,328.5 L427.60,328.5 Z M453.90,323.5 L455.10,318.5 L508.80,318.5 L510.00,323.5 L508.80,328.5 L455.10,328.5 Z M510.00,323.5 L511.20,318.5 L564.10,318.5 L565.30,323.5 L564.10,328.5 L511.20,328.5 Z M565.30,323.5 L566.50,318.5 L619.80,318.5 L621.00,323.5 L619.80,328.5 L566.50,328.5 Z M621.00,323.5 L622.20,318.5 L675.50,318.5 L676.70,323.5 L675.50,328.5 L622.20,328.5 Z M676.70,323.5 L677.90,318.5 L730.90,318.5 L732.10,323.5 L730.90,328.5 L677.90,328.5 Z M732.10,323.5 L733.30,318.5 L762.30,318.5 L763.50,323.5 L762.30,328.5 L733.30,328.5 Z M763.50,323.5 L764.70,318.5 L787.00,318.5 L788.20,323.5 L787.00,328.5 L764.70,328.5 Z M788.20,323.5 L789.40,318.5 L842.40,318.5 L843.60,323.5 L842.40,328.5 L789.40,328.5 Z M843.60,323.5 L844.80,318.5 L897.90,318.5 L899.10,323.5 L897.90,328.5 L844.80,328.5 Z M899.10,323.5 L900.30,318.5 L953.90,318.5 L955.10,323.5 L953.90,328.5 L900.30,328.5 Z M955.10,323.5 L956.30,318.5 L1010.80,318.5 L1012.00,323.5 L1010.80,328.5 L956.30,328.5 Z" fill="none" stroke="#00a800" stroke-width="1"/>
<path d="M285.80,318.5 L288.20,328.5 M288.20,318.5 L285.80,328.5" stroke="#00ff00" stroke-width="1" fill="none"/>
<path d="M341.40,318.5 L343.80,328.5 M343.80,318.5 L341.40,328.5" stroke="#00ff00" stroke-width="1" fill="none"/>
<path d="M508.80,318.5 L511.20,328.5 M511.20,318.5 L508.80,328.5" stroke="#00ff00" stroke-width="1" fill="none"/>
<path d="M564.10,318.5 L566.50,328.5 M566.50,318.5 L564.10,328.5" stroke="#00ff00" stroke-width="1" fill="none"/>
<path d="M730.90,318.5 L733.30,328.5 M733.30,318.5 L730.90,328.5" stroke="#00ff00" stroke-width="1" fill="none"/>
<path d="M787.00,318.5 L789.40,328.5 M789.40,318.5 L787.00,328.5" stroke="#00ff00" stroke-width="1" fill="none"/>
<path d="M953.90,318.5 L956.30,328.5 M956.30,318.5 L953.90,328.5" stroke="#00ff00" stroke-width="1" fill="none"/>
<text x="232.60" y="327.11" class="wt" textLength="16.00" lengthAdjust="spacingAndGlyphs">IDLE</text>
<text x="260.50" y="327.11" class="wt" textLength="16.00" lengthAdjust="spacingAndGlyphs">Tsk2</text>
<text x="288.60" y="327.11" class="wt" textLength="16.00" lengthAdjust="spacingAndGlyphs">Tsk2</text>
<text x="344.20" y="327.11" class="wt" textLength="16.00" lengthAdjust="spacingAndGlyphs">Tsk2</text>
<text x="400.00" y="327.11" class="wt" textLength="16.00" lengthAdjust="spacingAndGlyphs">Tsk2</text>
<text x="428.00" y="327.11" class="wt" textLength="16.00" lengthAdjust="spacingAndGlyphs">Main</text>
<text x="455.50" y="327.11" class="wt" textLength="16.00" lengthAdjust="spacingAndGlyphs">Main</text>
<text x="511.60" y="327.11" class="wt" textLength="16.00" lengthAdjust="spacingAndGlyphs">Tsk2</text>
<text x="566.90" y="327.11" class="wt" textLength="16.00" lengthAdjust="spacingAndGlyphs">Tsk2</text>
<text x="622.60" y="327.11" class="wt" textLength="16.00" lengthAdjust="spacingAndGlyphs">Tsk2</text>
<text x="678.30" y="327.11" class="wt" textLength="16.00" lengthAdjust="spacingAndGlyphs">Tsk2</text>
<text x="733.70" y="327.11" class="wt" textLength="16.00" lengthAdjust="spacingAndGlyphs">Tsk2</text>
<text x="765.10" y="327.11" class="wt" textLength="16.00" lengthAdjust="spacingAndGlyphs">IDLE</text>
<text x="789.80" y="327.11" class="wt" textLength="16.00" lengthAdjust="spacingAndGlyphs">IDLE</text>
<text x="845.20" y="327.11" class="wt" textLength="16.00" lengthAdjust="spacingAndGlyphs">IDLE</text>
<text x="900.70" y="327.11" class="wt" textLength="16.00" lengthAdjust="spacingAndGlyphs">IDLE</text>
<text x="956.70" y="327.11" class="wt" textLength="16.00" lengthAdjust="spacingAndGlyphs">IDLE</text>
<line x1="231.0" y1="329.50" x2="1007.0" y2="329.50" stroke="#16164c" stroke-width="1"/>
<path d="M229.00,335.40 L231.00,334.60 L286.20,334.60 L287.70,334.10 L341.88,334.10 L343.38,335.70 L453.24,335.70 L454.74,334.60 L508.92,334.60 L510.42,333.40 L564.60,333.40 L566.10,334.30 L620.28,334.30 L621.78,335.20 L675.96,335.20 L677.46,334.10 L731.64,334.10 L733.14,333.40 L843.00,333.40 L844.50,334.30 L1010.00,334.30" fill="none" stroke="#00a800" stroke-width="1.1"/>
<line x1="231.0" y1="355.50" x2="1007.0" y2="355.50" stroke="#16164c" stroke-width="1"/>
<path d="M229.00,368.70 L231.00,367.90 L286.20,367.90 L287.70,366.70 L453.24,366.70 L454.74,367.50 L508.92,367.50 L510.42,366.40 L564.60,366.40 L566.10,364.20 L620.28,364.20 L621.78,362.30 L675.96,362.30 L677.46,359.60 L731.64,359.60 L733.14,358.10 L843.00,358.10 L844.50,359.30 L898.68,359.30 L900.18,361.40 L954.36,361.40 L955.86,363.70 L1010.00,363.70" fill="none" stroke="#00a800" stroke-width="1.1"/>
<line x1="231.0" y1="382.50" x2="1007.0" y2="382.50" stroke="#16164c" stroke-width="1"/>
<path d="M229.00,395.50 L231.00,394.70 L286.20,394.70 L287.70,394.20 L341.88,394.20 L343.38,393.70 L508.92,393.70 L510.42,393.10 L564.60,393.10 L566.10,397.20 L620.28,397.20 L621.78,395.50 L675.96,395.50 L677.46,394.20 L731.64,394.20 L733.14,392.60 L787.32,392.60 L788.82,391.80 L843.00,391.80 L844.50,392.30 L898.68,392.30 L900.18,393.20 L954.36,393.20 L955.86,394.20 L1010.00,394.20" fill="none" stroke="#00a800" stroke-width="1.1"/>
<line x1="231.0" y1="408.50" x2="1007.0" y2="408.50" stroke="#16164c" stroke-width="1"/>
<line x1="772.5" y1="66" x2="772.5" y2="419.0" stroke="#d27c76" stroke-width="1"/>
</svg>
<!-- wave hscroll -->
<div class="hs" style="left:231px;top:422px;width:776px"></div>
<div class="sbtn" style="left:231px;top:422px;width:9px;height:9px"><div class="arl"></div></div>
<div class="sbtn" style="left:624px;top:422px;width:24px;height:9px"></div>
<div class="sbtn" style="left:998px;top:422px;width:9px;height:9px"><div class="arr"></div></div>
<!-- vscroll -->
<div class="abs" style="left:1010px;top:54px;width:9px;height:365px;background:#c5c2bb"></div>
<div class="sbtn" style="left:1010px;top:54px;width:9px;height:365px"></div>
<div class="sbtn" style="left:1010px;top:54px;width:9px;height:8px"><div class="aru"></div></div>
<div class="sbtn" style="left:1010px;top:410px;width:9px;height:8px"><div class="ard"></div></div>
<!-- paned handle dots -->
<div class="abs" style="left:225px;top:230px;width:1.2px;height:20px;background:repeating-linear-gradient(#6f6d68 0 1.2px,transparent 1.2px 2.9px)"></div>
</body></html>
